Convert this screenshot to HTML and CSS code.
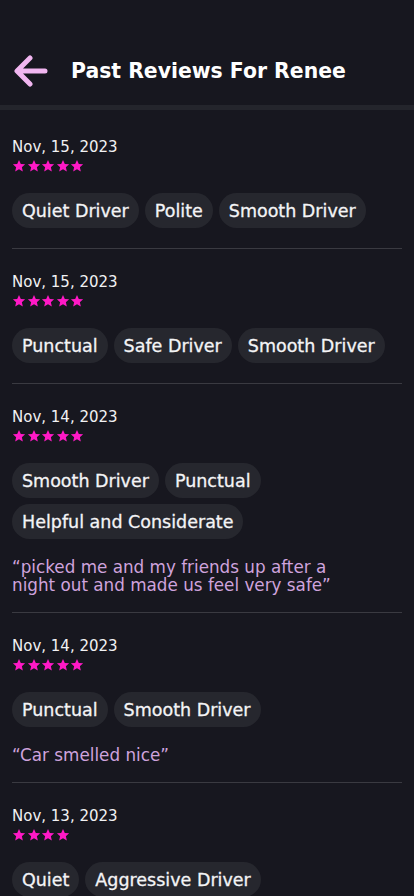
FILE: index.html
```html
<!DOCTYPE html>
<html>
<head>
<meta charset="utf-8">
<link rel="stylesheet" href="styles.css">
</head>
<body>
<header class="top">
  <svg class="back" width="36" height="32" viewBox="0 0 36 32"><path d="M32 16H5M17 3L4 16l13 13" fill="none" stroke="#f1b6f0" stroke-width="5" stroke-linecap="round" stroke-linejoin="round"/></svg>
  <h1 class="title">Past Reviews For Renee</h1>
</header>
<div class="sep"></div>
<main class="list">
  <section class="review">
    <div class="date">Nov, 15, 2023</div>
    <div class="stars" data-n="5"></div>
    <div class="chips"><span class="chip">Quiet Driver</span><span class="chip">Polite</span><span class="chip">Smooth Driver</span></div>
  </section>
  <section class="review">
    <div class="date">Nov, 15, 2023</div>
    <div class="stars" data-n="5"></div>
    <div class="chips"><span class="chip">Punctual</span><span class="chip">Safe Driver</span><span class="chip">Smooth Driver</span></div>
  </section>
  <section class="review">
    <div class="date">Nov, 14, 2023</div>
    <div class="stars" data-n="5"></div>
    <div class="chips"><span class="chip">Smooth Driver</span><span class="chip">Punctual</span><span class="chip">Helpful and Considerate</span></div>
    <p class="quote">“picked me and my friends up after a night out and made us feel very safe”</p>
  </section>
  <section class="review">
    <div class="date">Nov, 14, 2023</div>
    <div class="stars" data-n="5"></div>
    <div class="chips"><span class="chip">Punctual</span><span class="chip">Smooth Driver</span></div>
    <p class="quote">“Car smelled nice”</p>
  </section>
  <section class="review">
    <div class="date">Nov, 13, 2023</div>
    <div class="stars" data-n="4"></div>
    <div class="chips"><span class="chip">Quiet</span><span class="chip">Aggressive Driver</span></div>
  </section>
</main>
<script>
document.querySelectorAll('.stars').forEach(function(el){
  var n = +el.dataset.n, h = '';
  for (var i = 0; i < n; i++) {
    h += '<svg class="star" width="14" height="14" viewBox="0 0 24 24"><path d="M12 1.5l3.1 6.9 7.4.7-5.6 5 1.7 7.4L12 17.6l-6.6 3.9 1.7-7.4-5.6-5 7.4-.7z" fill="#ff19c6"/></svg>';
  }
  el.innerHTML = h;
});
</script>
</body>
</html>
```
FILE: styles.css
```css
* { box-sizing: border-box; }
html, body { margin: 0; padding: 0; }
body {
  background: #17171f;
  color: #f4f4f6;
  font-family: "DejaVu Sans", sans-serif;
  width: 414px;
  height: 896px;
  overflow: hidden;
}
.top {
  height: 105px;
  display: flex;
  align-items: center;
  padding: 37px 0 0 13px;
  gap: 22px;
}
.back { flex: none; }
.title {
  margin: 0;
  font-size: 20.4px;
  font-weight: 700;
  color: #ffffff;
}
.sep { height: 5px; background: #24252c; }
.list { padding: 4px 12px 0; }
.review {
  padding: 23px 0 20px;
  border-bottom: 1px solid #3a3a41;
}
.date {
  font-size: 15px;
  line-height: 20px;
  color: #f1f1f3;
}
.stars {
  display: flex;
  gap: 0.5px;
  margin-top: 2px;
  height: 14px;
}
.star { display: block; }
.chips {
  display: flex;
  flex-wrap: wrap;
  gap: 6px;
  margin-top: 20px;
}
.chip {
  height: 35px;
  display: inline-flex;
  align-items: center;
  padding: 0 10px;
  border-radius: 18px;
  background: #26272e;
  font-size: 17.5px;
  font-weight: 400;
  -webkit-text-stroke: 0.3px #f4f4f6;
  color: #f4f4f6;
}
.quote {
  margin: 19px 0 -2px;
  font-size: 16.8px;
  line-height: 18px;
  color: #cfa3dd;
  padding-right: 60px;
}
```
